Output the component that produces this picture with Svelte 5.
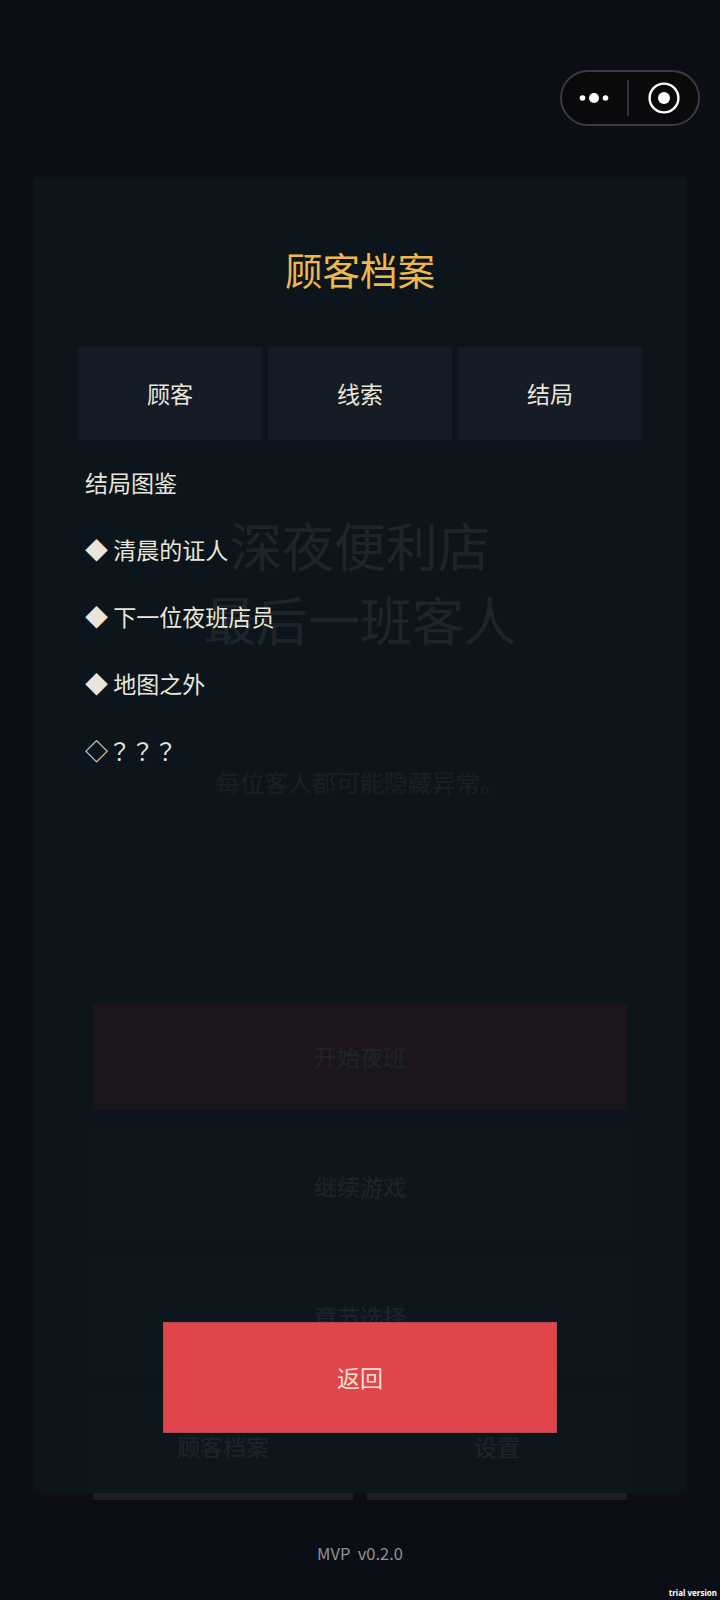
<script>
  const tabs = ["顾客", "线索", "结局"];
  const endings = [
    { name: "清晨的证人", found: true },
    { name: "下一位夜班店员", found: true },
    { name: "地图之外", found: true },
    { name: "？？？", found: false },
  ];
</script>

<div class="page">
  <div class="capsule">
    <svg class="more" width="34" height="12" viewBox="0 0 34 12">
      <circle cx="5.5" cy="6" r="2.8" fill="#fff" />
      <circle cx="17" cy="6" r="5" fill="#fff" />
      <circle cx="28.5" cy="6" r="2.8" fill="#fff" />
    </svg>
    <span class="divider"></span>
    <svg class="record" width="32" height="32" viewBox="0 0 32 32">
      <circle cx="16" cy="16" r="14.4" fill="none" stroke="#fff" stroke-width="2.4" />
      <circle cx="16" cy="16" r="6" fill="#fff" />
    </svg>
  </div>

  <div class="home">
    <h1>深夜便利店<br />最后一班客人</h1>
    <p class="sub">每位客人都可能隐藏异常。</p>
    <div class="menu">
      <div class="btn primary">开始夜班</div>
      <div class="btn">继续游戏</div>
      <div class="btn">章节选择</div>
      <div class="row">
        <div class="btn">顾客档案</div>
        <div class="btn">设置</div>
      </div>
    </div>
    <div class="version">MVP  v0.2.0</div>
  </div>

  <div class="panel">
    <h2>顾客档案</h2>
    <div class="tabs">
      {#each tabs as tab}
        <div class="tab">{tab}</div>
      {/each}
    </div>
    <div class="list">
      <div class="line">结局图鉴</div>
      {#each endings as item}
        {#if item.found}
          <div class="line">◆ {item.name}</div>
        {:else}
          <div class="line">◇<span class="unknown">{item.name}</span></div>
        {/if}
      {/each}
    </div>
    <div class="back">返回</div>
  </div>

  <div class="trial">trial version</div>
</div>

<style>
  :global(body) {
    margin: 0;
    background: #0c0e16;
  }

  .page {
    position: relative;
    width: 720px;
    height: 1600px;
    overflow: hidden;
    background: #0c0e16;
    font-family: "Noto Sans CJK SC", "Noto Sans", sans-serif;
    color: #e9e5da;
  }

  .capsule {
    position: absolute;
    top: 70px;
    left: 560px;
    z-index: 3;
    box-sizing: border-box;
    width: 140px;
    height: 56px;
    display: flex;
    align-items: center;
    border: 2px solid #3a3a40;
    border-radius: 28px;
    background: #0a0a0d;
  }

  .more {
    margin-left: 15px;
  }

  .divider {
    width: 2px;
    height: 36px;
    margin-left: 16px;
    background: #33343a;
  }

  .record {
    margin-left: 19px;
  }

  .home {
    display: flex;
    flex-direction: column;
    align-items: center;
    padding-top: 508px;
  }

  h1 {
    margin: 0;
    font-size: 52px;
    font-weight: 400;
    line-height: 74px;
    text-align: center;
  }

  .sub {
    margin: 108px 0 0;
    font-size: 24px;
    line-height: 36px;
    color: #a8a8a6;
  }

  .menu {
    width: 534px;
    margin-top: 203px;
    display: flex;
    flex-direction: column;
    gap: 23px;
  }

  .btn {
    box-sizing: border-box;
    height: 107px;
    padding-bottom: 2px;
    display: flex;
    align-items: center;
    justify-content: center;
    flex: 1;
    flex-basis: 107px;
    font-size: 23.04px;
    background: #1a1d27;
  }

  .btn.primary {
    background: #e0181f;
  }

  .row {
    display: flex;
    gap: 14px;
  }

  .version {
    margin-top: 40px;
    font-size: 16.5px;
    line-height: 26px;
    color: #8f929a;
    white-space: pre;
  }

  .panel {
    position: absolute;
    top: 177px;
    left: 33px;
    z-index: 2;
    box-sizing: border-box;
    width: 654px;
    height: 1316px;
    padding: 0 45px;
    display: flex;
    flex-direction: column;
    background: rgba(13, 21, 28, 0.93);
  }

  h2 {
    margin: 0;
    height: 170px;
    padding-top: 62px;
    box-sizing: border-box;
    font-size: 37.5px;
    font-weight: 400;
    line-height: 60px;
    text-align: center;
    color: #efb74f;
  }

  .tabs {
    display: flex;
    gap: 6px;
  }

  .tab {
    box-sizing: border-box;
    flex: 1;
    height: 93px;
    padding-bottom: 2px;
    display: flex;
    align-items: center;
    justify-content: center;
    font-size: 23.04px;
    background: #161c26;
  }

  .list {
    margin-top: 9px;
    padding-left: 7px;
  }

  .line {
    height: 67px;
    line-height: 67px;
    font-size: 23.04px;
    white-space: pre;
  }

  .unknown {
    font-family: "Noto Sans CJK TC", "Noto Sans", sans-serif;
  }

  .back {
    box-sizing: border-box;
    width: 394px;
    height: 111px;
    margin: auto auto 60px;
    padding-bottom: 2px;
    display: flex;
    align-items: center;
    justify-content: center;
    font-size: 23.04px;
    color: #f6e3d6;
    background: #e0454b;
    border: 1px solid #b24a50;
  }

  .trial {
    position: absolute;
    right: 3px;
    bottom: 0;
    z-index: 3;
    font-family: "Noto Sans", sans-serif;
    font-size: 8px;
    font-weight: 700;
    line-height: 14px;
    color: #fff;
  }
</style>
